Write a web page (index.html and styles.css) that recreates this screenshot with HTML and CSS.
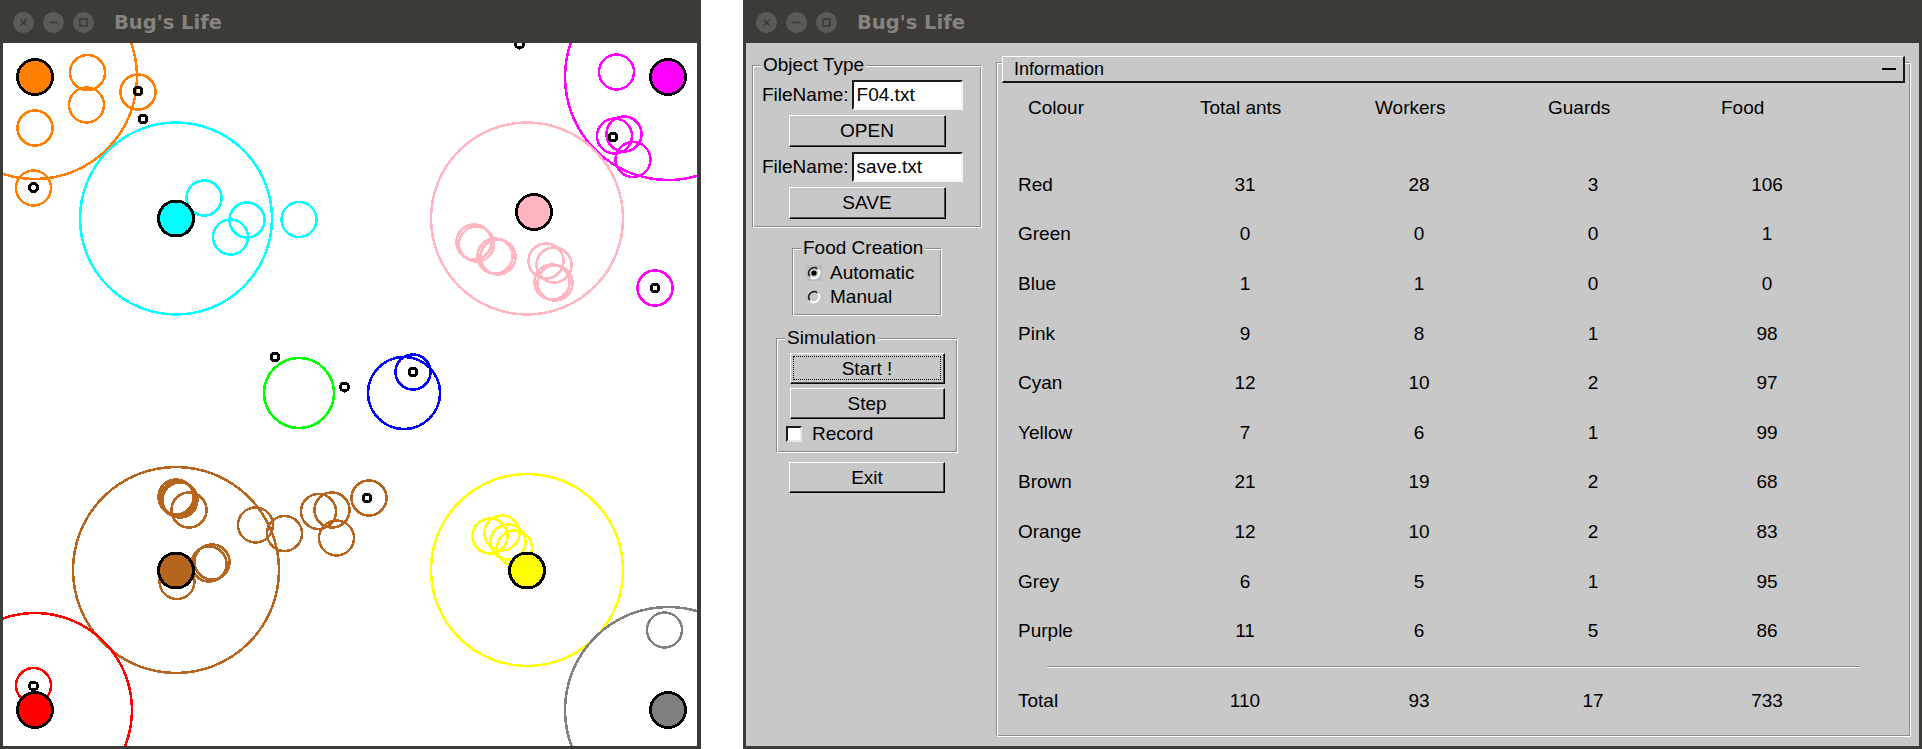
FILE: index.html
```html
<!DOCTYPE html>
<html>
<head>
<meta charset="utf-8">
<title>Bug's Life</title>
<link rel="stylesheet" href="styles.css">
</head>
<body>
<div class="desktop">
  <div class="window win-canvas">
    <div class="titlebar">
      <div class="tb-btns">
        <svg class="tb-btn" viewBox="0 0 21 21"><circle cx="10.5" cy="10.5" r="10.5" fill="#5b5a56"/><path d="M7.5 7.5l6 6M13.5 7.5l-6 6" stroke="#3c3b37" stroke-width="1.6"/></svg>
        <svg class="tb-btn" viewBox="0 0 21 21"><circle cx="10.5" cy="10.5" r="10.5" fill="#5b5a56"/><path d="M6.5 10.5h8" stroke="#3c3b37" stroke-width="1.8"/></svg>
        <svg class="tb-btn" viewBox="0 0 21 21"><circle cx="10.5" cy="10.5" r="10.5" fill="#5b5a56"/><rect x="7" y="7" width="7" height="7" fill="none" stroke="#3c3b37" stroke-width="1.6"/></svg>
      </div>
      <div class="title">Bug's Life</div>
    </div>
    <div class="canvas">
      <svg class="field" width="694" height="703" viewBox="3 43 694 703">
        <g fill="none" stroke-width="2.5">
          <circle cx="35" cy="77" r="102" stroke="#ff8000"/>
          <circle cx="668" cy="77" r="103" stroke="#ff00ff"/>
          <circle cx="176" cy="218.5" r="96" stroke="#00ffff"/>
          <circle cx="527" cy="218.5" r="96" stroke="#ffb6c1"/>
          <circle cx="299" cy="393" r="35" stroke="#00ff00"/>
          <circle cx="404" cy="393" r="36" stroke="#0000ff"/>
          <circle cx="176" cy="570" r="103" stroke="#b5651d"/>
          <circle cx="527" cy="570" r="96" stroke="#ffff00"/>
          <circle cx="35" cy="710" r="97" stroke="#ff0000"/>
          <circle cx="668" cy="710" r="103" stroke="#808080"/>
        </g>
        <g fill="none" stroke-width="2.5" stroke="#ff8000">
          <circle cx="87.5" cy="72.5" r="17.5"/>
          <circle cx="86.5" cy="105" r="17.5"/>
          <circle cx="35" cy="128" r="17.5"/>
          <circle cx="138" cy="92" r="17.5"/>
          <circle cx="33.5" cy="188" r="17.5"/>
        </g>
        <g fill="none" stroke-width="2.5" stroke="#ff00ff">
          <circle cx="616.5" cy="72" r="17.5"/>
          <circle cx="614.5" cy="136" r="17.5"/>
          <circle cx="624" cy="134" r="17.5"/>
          <circle cx="633" cy="159.5" r="17.5"/>
          <circle cx="655" cy="288" r="17.5"/>
        </g>
        <g fill="none" stroke-width="2.5" stroke="#00ffff">
          <circle cx="204" cy="198" r="17.5"/>
          <circle cx="247" cy="220" r="17.5"/>
          <circle cx="230.5" cy="237" r="17.5"/>
          <circle cx="299" cy="219.5" r="17.5"/>
        </g>
        <g fill="none" stroke-width="2.5" stroke="#ffb6c1">
          <circle cx="474" cy="242" r="17.5"/>
          <circle cx="476.5" cy="244" r="17.5"/>
          <circle cx="495" cy="256" r="17.5"/>
          <circle cx="498" cy="257" r="17.5"/>
          <circle cx="546" cy="261" r="17.5"/>
          <circle cx="554" cy="265" r="17.5"/>
          <circle cx="552" cy="282" r="17.5"/>
          <circle cx="555" cy="283" r="17.5"/>
        </g>
        <g fill="none" stroke-width="2.5" stroke="#0000ff">
          <circle cx="413" cy="372" r="17.5"/>
        </g>
        <g fill="none" stroke-width="2.5" stroke="#b5651d">
          <circle cx="176" cy="497" r="17.5"/>
          <circle cx="178" cy="499" r="17.5"/>
          <circle cx="180" cy="500" r="17.5"/>
          <circle cx="189" cy="510" r="17.5"/>
          <circle cx="255.5" cy="525" r="17.5"/>
          <circle cx="284.5" cy="533.5" r="17.5"/>
          <circle cx="318.5" cy="511.5" r="17.5"/>
          <circle cx="332" cy="510" r="17.5"/>
          <circle cx="336.5" cy="538" r="17.5"/>
          <circle cx="369" cy="498" r="17.5"/>
          <circle cx="209" cy="564" r="17.5"/>
          <circle cx="212" cy="562" r="17.5"/>
          <circle cx="177" cy="581.5" r="17.5"/>
        </g>
        <g fill="none" stroke-width="2.5" stroke="#ffff00">
          <circle cx="490" cy="536" r="17.5"/>
          <circle cx="502" cy="533" r="17.5"/>
          <circle cx="508" cy="542" r="17.5"/>
          <circle cx="514.5" cy="548" r="17.5"/>
        </g>
        <g fill="none" stroke-width="2.5">
          <circle cx="33.5" cy="685.5" r="17.5" stroke="#ff0000"/>
          <circle cx="664.5" cy="630" r="17.5" stroke="#808080"/>
        </g>
        <g stroke="#000" stroke-width="3">
          <circle cx="35" cy="77" r="17.5" fill="#ff8000"/>
          <circle cx="668" cy="77" r="17.5" fill="#ff00ff"/>
          <circle cx="176" cy="218.5" r="17.5" fill="#00ffff"/>
          <circle cx="534" cy="212" r="17.5" fill="#ffb6c1"/>
          <circle cx="176" cy="570.5" r="17.5" fill="#b5651d"/>
          <circle cx="527" cy="570.5" r="17.5" fill="#ffff00"/>
          <circle cx="35" cy="710" r="17.5" fill="#ff0000"/>
          <circle cx="668" cy="710" r="17.5" fill="#808080"/>
        </g>
        <g fill="none" stroke="#000" stroke-width="3">
          <circle cx="519.5" cy="44" r="4"/>
          <circle cx="143" cy="119" r="4"/>
          <circle cx="138" cy="91" r="4"/>
          <circle cx="33.5" cy="187.5" r="4"/>
          <circle cx="613" cy="137" r="4"/>
          <circle cx="655" cy="288" r="4"/>
          <circle cx="275" cy="357" r="4"/>
          <circle cx="344.5" cy="387" r="4"/>
          <circle cx="413" cy="372" r="4"/>
          <circle cx="367" cy="498" r="4"/>
          <circle cx="33.5" cy="686" r="4"/>
        </g>
      </svg>
    </div>
  </div>

  <div class="window win-panel">
    <div class="titlebar">
      <div class="tb-btns">
        <svg class="tb-btn" viewBox="0 0 21 21"><circle cx="10.5" cy="10.5" r="10.5" fill="#5b5a56"/><path d="M7.5 7.5l6 6M13.5 7.5l-6 6" stroke="#3c3b37" stroke-width="1.6"/></svg>
        <svg class="tb-btn" viewBox="0 0 21 21"><circle cx="10.5" cy="10.5" r="10.5" fill="#5b5a56"/><path d="M6.5 10.5h8" stroke="#3c3b37" stroke-width="1.8"/></svg>
        <svg class="tb-btn" viewBox="0 0 21 21"><circle cx="10.5" cy="10.5" r="10.5" fill="#5b5a56"/><rect x="7" y="7" width="7" height="7" fill="none" stroke="#3c3b37" stroke-width="1.6"/></svg>
      </div>
      <div class="title">Bug's Life</div>
    </div>
    <div class="panel">
      <div class="controls">
        <fieldset class="group g-object">
          <legend>Object Type</legend>
          <div class="g-body">
            <div class="file-row"><span>FileName:</span><div class="entry">F04.txt</div></div>
            <div class="btn btn-wide">OPEN</div>
            <div class="file-row"><span>FileName:</span><div class="entry">save.txt</div></div>
            <div class="btn btn-wide">SAVE</div>
          </div>
        </fieldset>

        <fieldset class="group g-food">
          <legend>Food Creation</legend>
          <div class="g-body radios">
            <div class="radio">
              <svg class="radio-ind" viewBox="0 0 16 16"><rect width="16" height="16" fill="#bdbdbd"/><circle cx="8" cy="8" r="5.5" fill="#c8c8c8"/><path d="M3.6 11.2A5.5 5.5 0 0 1 11.2 3.6" fill="none" stroke="#1a1a1a" stroke-width="1.5"/><path d="M12.4 4.8A5.5 5.5 0 0 1 4.8 12.4" fill="none" stroke="#fff" stroke-width="2"/><circle cx="8" cy="8" r="2.6" fill="#000"/></svg>
              <span>Automatic</span>
            </div>
            <div class="radio">
              <svg class="radio-ind" viewBox="0 0 16 16"><circle cx="8" cy="8" r="5.5" fill="#c8c8c8"/><path d="M3.6 11.2A5.5 5.5 0 0 1 11.2 3.6" fill="none" stroke="#1a1a1a" stroke-width="1.5"/><path d="M12.4 4.8A5.5 5.5 0 0 1 4.8 12.4" fill="none" stroke="#fff" stroke-width="2"/></svg>
              <span>Manual</span>
            </div>
          </div>
        </fieldset>

        <fieldset class="group g-sim">
          <legend>Simulation</legend>
          <div class="g-body sim-body">
            <div class="btn btn-sim focus">Start !</div>
            <div class="btn btn-sim">Step</div>
            <div class="check-row"><span class="checkbox"></span><span>Record</span></div>
          </div>
        </fieldset>

        <div class="btn btn-exit">Exit</div>
      </div>

      <div class="info">
        <div class="info-head"><span>Information</span><span class="collapse"></span></div>
        <div class="thead">
          <span>Colour</span><span>Total ants</span><span>Workers</span><span>Guards</span><span>Food</span>
        </div>
        <div class="tbody">
          <span>Red</span><span>31</span><span>28</span><span>3</span><span>106</span>
          <span>Green</span><span>0</span><span>0</span><span>0</span><span>1</span>
          <span>Blue</span><span>1</span><span>1</span><span>0</span><span>0</span>
          <span>Pink</span><span>9</span><span>8</span><span>1</span><span>98</span>
          <span>Cyan</span><span>12</span><span>10</span><span>2</span><span>97</span>
          <span>Yellow</span><span>7</span><span>6</span><span>1</span><span>99</span>
          <span>Brown</span><span>21</span><span>19</span><span>2</span><span>68</span>
          <span>Orange</span><span>12</span><span>10</span><span>2</span><span>83</span>
          <span>Grey</span><span>6</span><span>5</span><span>1</span><span>95</span>
          <span>Purple</span><span>11</span><span>6</span><span>5</span><span>86</span>
        </div>
        <div class="sep"></div>
        <div class="tbody total">
          <span>Total</span><span>110</span><span>93</span><span>17</span><span>733</span>
        </div>
      </div>
    </div>
  </div>
</div>
</body>
</html>
```

FILE: styles.css
```css
* { box-sizing: border-box; }
html, body { margin: 0; padding: 0; }
body {
  background: #fff;
  width: 1922px;
  height: 749px;
  overflow: hidden;
  font-family: "Liberation Sans", Arial, sans-serif;
}
.desktop { display: flex; gap: 42px; height: 749px; }

.window {
  background: #3c3b37;
  display: flex;
  flex-direction: column;
  height: 749px;
}
.win-canvas { width: 701px; padding: 0 4px 3px 3px; }
.win-panel { width: 1179px; padding: 0 3px 3px 3px; }

.titlebar {
  height: 43px;
  flex: none;
  display: flex;
  align-items: center;
  padding-left: 10px;
}
.tb-btns { display: flex; gap: 9px; margin-top: 1px; }
.tb-btn { width: 21px; height: 21px; display: block; }
.title {
  margin-left: 20px;
  font-family: "DejaVu Sans", sans-serif;
  font-weight: bold;
  font-size: 19.5px;
  color: #85837d;
  margin-top: 2px;
}

.canvas { flex: 1; background: #fff; overflow: hidden; }
.field { display: block; shape-rendering: crispEdges; }

.panel {
  flex: 1;
  background: #c8c8c8;
  display: flex;
  padding: 12px 8px 9px 6px;
  color: #000;
  font-size: 19px;
}

.controls {
  width: 230px;
  flex: none;
  display: flex;
  flex-direction: column;
  align-items: center;
}

.group {
  margin: 0;
  padding: 0;
  min-width: 0;
  border: 1px solid;
  border-color: #8c8c8c #fff #fff #8c8c8c;
  box-shadow: inset 1px 1px 0 #fff, inset -1px -1px 0 #8c8c8c;
}
.group legend {
  margin-left: 8px;
  padding: 0 2px;
  line-height: 20px;
  background: #c8c8c8;
}

.g-object { width: 230px; }
.g-object .g-body {
  display: flex;
  flex-direction: column;
  align-items: center;
  gap: 5px;
  padding: 5px 0 8px;
}
.file-row {
  align-self: flex-start;
  margin-left: 9px;
  display: flex;
  align-items: center;
  gap: 3px;
}
.entry {
  width: 111px;
  height: 30px;
  background: #fff;
  border: 2px solid;
  border-color: #1a1a1a #f4f4f4 #f4f4f4 #1a1a1a;
  padding-left: 3px;
  line-height: 26px;
}

.btn {
  position: relative;
  display: flex;
  align-items: center;
  justify-content: center;
  border: 1px solid;
  border-color: #fff #000 #000 #fff;
  box-shadow: inset -1px -1px 0 #4a4a4a;
  background: #c8c8c8;
}
.btn-wide { width: 157px; height: 32px; }
.btn-sim { width: 155px; height: 31px; }
.btn-exit { width: 156px; height: 31px; margin-top: 9px; }
.btn.focus::after {
  content: "";
  position: absolute;
  left: 2px;
  top: 2px;
  right: 3px;
  bottom: 3px;
  border: 1px dotted #000;
}

.g-food { width: 150px; margin-top: 10px; }
.radios { padding: 3px 0 6px 13px; }
.radio { height: 24px; display: flex; align-items: center; gap: 8px; }
.radio-ind { width: 16px; height: 16px; display: block; }

.g-sim { width: 182px; margin-top: 12px; }
.sim-body {
  display: flex;
  flex-direction: column;
  align-items: center;
  gap: 4px;
  padding: 5px 0 9px;
}
.check-row {
  align-self: flex-start;
  margin-left: 9px;
  margin-top: 1px;
  height: 19px;
  display: flex;
  align-items: center;
  gap: 10px;
}
.checkbox {
  width: 16px;
  height: 16px;
  background: #fff;
  border: 2px solid;
  border-color: #1a1a1a #e8e8e8 #e8e8e8 #1a1a1a;
}

.info {
  flex: 1;
  margin: 7px 0 0 14px;
  border: 1px solid;
  border-color: #8c8c8c #fff #fff #8c8c8c;
  box-shadow: inset 1px 1px 0 #fff, inset -1px -1px 0 #8c8c8c;
  display: flex;
  flex-direction: column;
}
.info-head {
  margin: -7px 5px 0;
  height: 27px;
  flex: none;
  background: #c8c8c8;
  border-style: solid;
  border-width: 1px 2px 2px 1px;
  border-color: #fff #161616 #161616 #fff;
  display: flex;
  align-items: center;
  justify-content: space-between;
  padding: 0 7px 0 11px;
  font-size: 18px;
}
.collapse { width: 14px; height: 2px; background: #000; }

.thead {
  display: grid;
  grid-template-columns: 172px 175px 173px 173px 1fr;
  margin: 10px 0 0 31px;
  height: 30px;
  align-items: center;
}
.tbody {
  display: grid;
  grid-template-columns: 140px repeat(4, 174px);
  grid-auto-rows: 49.6px;
  align-items: center;
  margin: 37px 0 0 21px;
}
.tbody span { text-align: center; }
.tbody span:nth-child(5n+1) { text-align: left; }
.sep {
  margin: 10px 51px 0 50px;
  height: 2px;
  border-top: 1px solid #8c8c8c;
  border-bottom: 1px solid #fff;
}
.tbody.total { margin-top: 8px; }
```
